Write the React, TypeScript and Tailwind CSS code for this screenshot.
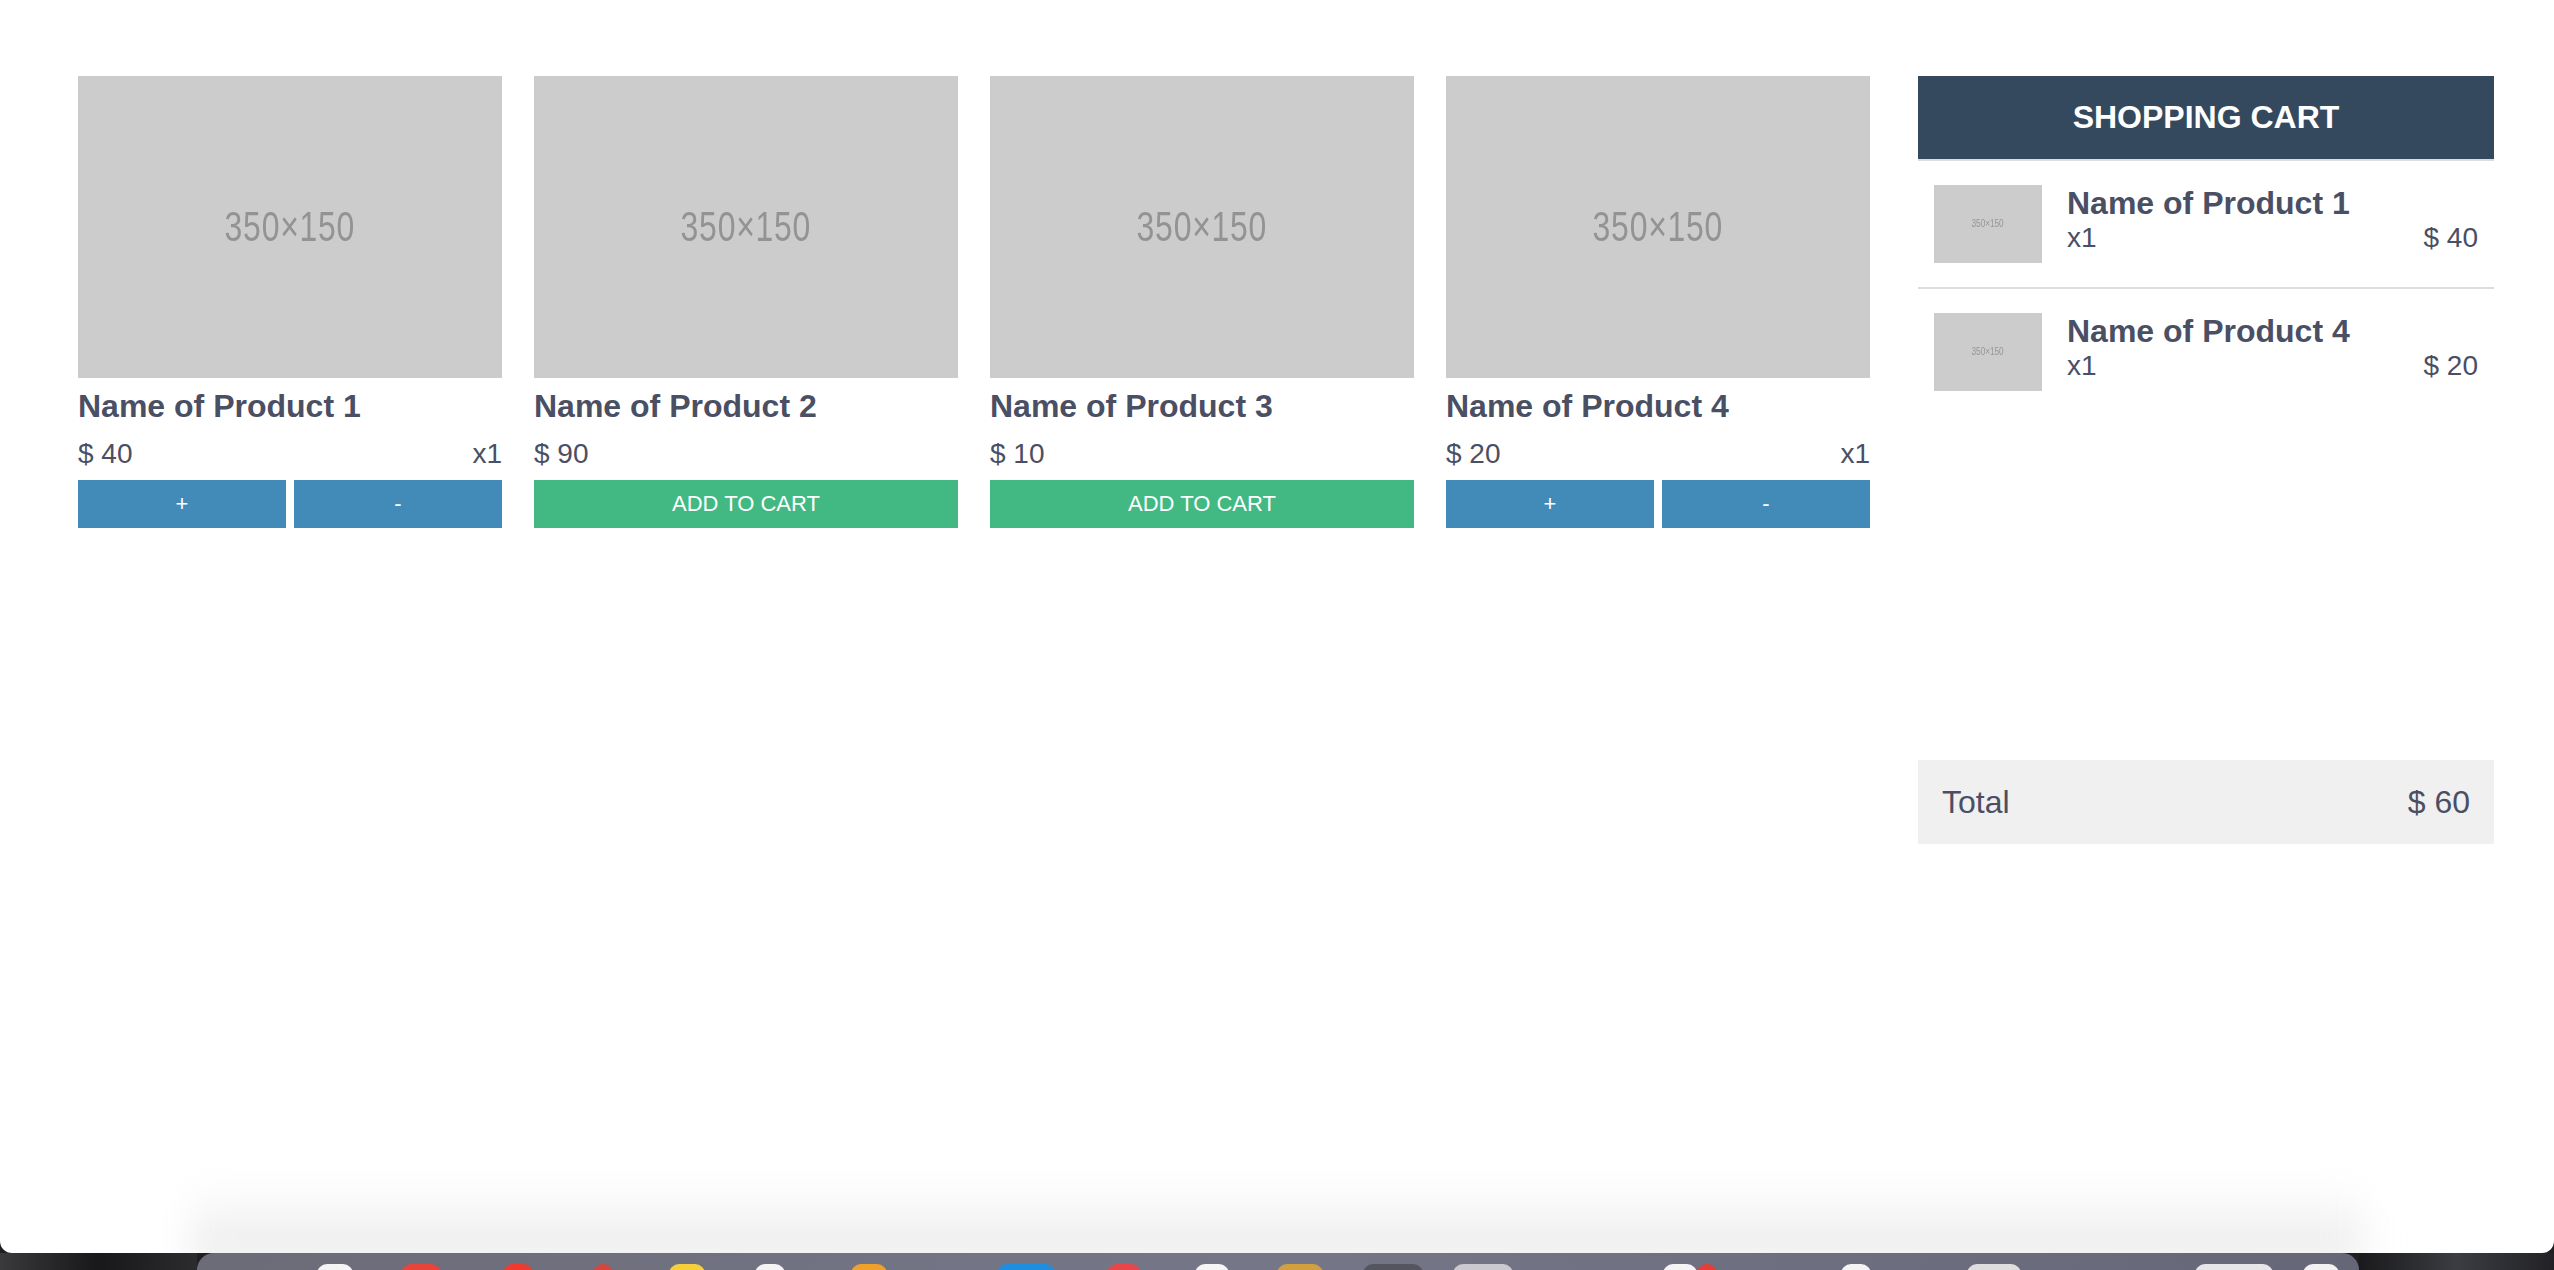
import { useState } from 'react';

type Product = {
  id: number;
  name: string;
  price: number;
  qty: number;
};

const initialProducts: Product[] = [
  { id: 1, name: 'Name of Product 1', price: 40, qty: 1 },
  { id: 2, name: 'Name of Product 2', price: 90, qty: 0 },
  { id: 3, name: 'Name of Product 3', price: 10, qty: 0 },
  { id: 4, name: 'Name of Product 4', price: 20, qty: 1 },
];

const dockIcons = [
  { w: 'w-[36px]', ml: 'ml-[120px]', color: 'bg-[#f4f4f4]' },
  { w: 'w-[40px]', ml: 'ml-[48px]', color: 'bg-[#e8443a]' },
  { w: 'w-[30px]', ml: 'ml-[62px]', color: 'bg-[#f03a2e]' },
  { w: 'w-[20px]', ml: 'ml-[60px]', color: 'bg-[#d8453b]' },
  { w: 'w-[36px]', ml: 'ml-[56px]', color: 'bg-[#f6cf3a]' },
  { w: 'w-[30px]', ml: 'ml-[50px]', color: 'bg-[#f4f4f4]' },
  { w: 'w-[36px]', ml: 'ml-[66px]', color: 'bg-[#f0a12a]' },
  { w: 'w-[58px]', ml: 'ml-[110px]', color: 'bg-[#1e8fe0]' },
  { w: 'w-[34px]', ml: 'ml-[52px]', color: 'bg-[#e9464a]' },
  { w: 'w-[34px]', ml: 'ml-[54px]', color: 'bg-[#f6f6f6]' },
  { w: 'w-[46px]', ml: 'ml-[48px]', color: 'bg-[#d2a13e]' },
  { w: 'w-[60px]', ml: 'ml-[40px]', color: 'bg-[#55555f]' },
  { w: 'w-[60px]', ml: 'ml-[30px]', color: 'bg-[#c9c9cf]' },
  { w: 'w-[34px]', ml: 'ml-[150px]', color: 'bg-[#f4f4f4]' },
  { w: 'w-[20px]', ml: 'ml-[0px]', color: 'bg-[#ec3a34]' },
  { w: 'w-[30px]', ml: 'ml-[124px]', color: 'bg-[#f4f4f4]' },
  { w: 'w-[54px]', ml: 'ml-[96px]', color: 'bg-[#dedede]' },
  { w: 'w-[78px]', ml: 'ml-[174px]', color: 'bg-[#e6e6e8]' },
  { w: 'w-[36px]', ml: 'ml-[30px]', color: 'bg-[#f2f2f2]' },
];

const Placeholder = ({ small }: { small?: boolean }) => (
  <div
    className={
      small
        ? 'w-[108px] h-[78px] shrink-0 bg-[#cccccc] flex items-center justify-center overflow-hidden'
        : 'h-[302px] bg-[#cccccc] flex items-center justify-center overflow-hidden'
    }
  >
    <span
      className={
        small
          ? 'text-[10px] leading-none text-[#969696] scale-x-[0.82]'
          : 'text-[42px] leading-none text-[#939393] scale-x-[0.76] tracking-[1px]'
      }
    >
      350×150
    </span>
  </div>
);

const App = () => {
  const [products, setProducts] = useState<Product[]>(initialProducts);

  const changeQty = (id: number, delta: number) => {
    setProducts((prev) =>
      prev.map((p) => (p.id === id ? { ...p, qty: Math.max(0, p.qty + delta) } : p))
    );
  };

  const cartItems = products.filter((p) => p.qty > 0);
  const total = cartItems.reduce((sum, p) => sum + p.price * p.qty, 0);

  return (
    <div className="h-screen flex flex-col bg-[#1f1f22] leading-[normal] text-[#4a4f64] font-['Liberation_Sans',Arial,sans-serif]">
      {/* browser window */}
      <div className="flex-1 bg-white rounded-b-[12px] overflow-hidden flex flex-col justify-between">
        <div className="flex pl-[78px] pt-[76px]">
          <div className="flex gap-[32px]">
            {products.map((p) => (
              <div key={p.id} className="w-[424px] flex flex-col">
                <Placeholder />
                <h3 className="mt-[10px] text-[32px] font-bold">{p.name}</h3>
                <div className="mt-[13px] flex justify-between text-[28px]">
                  <span>$ {p.price}</span>
                  {p.qty > 0 && <span>x{p.qty}</span>}
                </div>
                <div className="mt-[10px] flex gap-[8px] h-[48px]">
                  {p.qty > 0 ? (
                    <>
                      <button
                        onClick={() => changeQty(p.id, 1)}
                        className="flex-1 bg-[#428bb9] text-white text-[22px]"
                      >
                        +
                      </button>
                      <button
                        onClick={() => changeQty(p.id, -1)}
                        className="flex-1 bg-[#428bb9] text-white text-[22px]"
                      >
                        -
                      </button>
                    </>
                  ) : (
                    <button
                      onClick={() => changeQty(p.id, 1)}
                      className="flex-1 bg-[#42b883] text-white text-[22px]"
                    >
                      ADD TO CART
                    </button>
                  )}
                </div>
              </div>
            ))}
          </div>

          {/* cart */}
          <div className="w-[576px] ml-[48px] flex flex-col">
            <div className="h-[83px] bg-[#35495e] flex items-center justify-center text-white font-bold text-[32px]">
              SHOPPING CART
            </div>
            <div className="h-[601px]">
              {cartItems.map((p) => (
                <div
                  key={p.id}
                  className="border-t-2 border-[#dddddd] px-[16px] py-[24px] flex items-start gap-[25px]"
                >
                  <Placeholder small />
                  <div className="flex-1 flex flex-col">
                    <span className="text-[32px] font-bold">{p.name}</span>
                    <div className="flex justify-between text-[28px]">
                      <span>x{p.qty}</span>
                      <span>$ {p.price * p.qty}</span>
                    </div>
                  </div>
                </div>
              ))}
            </div>
            <div className="h-[84px] bg-[#f0f0f0] px-[24px] flex items-center justify-between text-[32px]">
              <span>Total</span>
              <span>$ {total}</span>
            </div>
          </div>
        </div>

        {/* dock shadow */}
        <div className="h-[80px] mx-[190px] bg-gradient-to-b from-white to-[#e9e9e9] blur-[18px] translate-y-[10px]" />
      </div>

      {/* desktop + dock */}
      <div className="h-[17px] flex">
        <div className="w-[197px] bg-gradient-to-r from-[#3a3a3c] via-[#18181a] to-[#2c2c2e]" />
        <div className="flex-1 rounded-t-[22px] bg-gradient-to-r from-[#6c6b78] via-[#757789] to-[#656778] flex items-start overflow-hidden">
          {dockIcons.map((icon, i) => (
            <div key={i} className={`${icon.w} ${icon.ml} ${icon.color} h-[10px] mt-[11px] rounded-t-full shrink-0`} />
          ))}
        </div>
        <div className="w-[195px] bg-gradient-to-r from-[#1a1a1c] via-[#3b3d42] to-[#222226]" />
      </div>
    </div>
  );
};

export default App;
